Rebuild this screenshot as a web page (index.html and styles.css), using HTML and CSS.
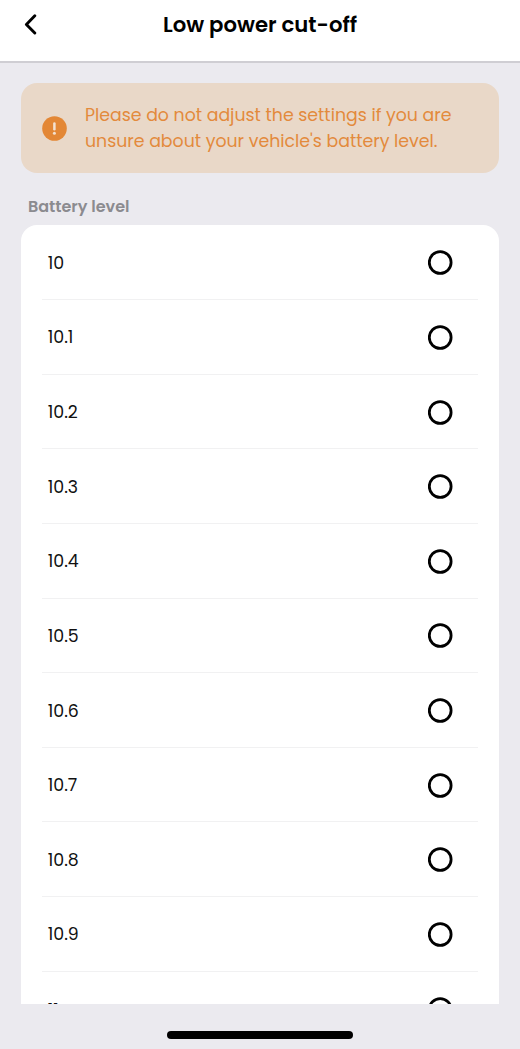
FILE: index.html
```html
<!DOCTYPE html>
<html lang="en">
<head>
<meta charset="utf-8">
<title>Low power cut-off</title>
<link rel="stylesheet" href="styles.css">
</head>
<body>
<div class="screen">
  <header class="header">
    <svg class="back" width="14" height="22" viewBox="0 0 14 22" fill="none" stroke="#000" stroke-width="2.9" stroke-linecap="round" stroke-linejoin="round"><path d="M10.8 2.8 2.4 11.4l8.4 8.6"/></svg>
    <h1 class="title">Low power cut-off</h1>
  </header>
  <main class="content">
    <section class="notice">
      <svg class="notice-icon" width="25" height="25" viewBox="0 0 25 25"><circle cx="12.5" cy="12.5" r="12.3" fill="#e38735"/><path d="M12.4 7.6v5.6" stroke="#f3e1d0" stroke-width="2.5" stroke-linecap="round"/><circle cx="12.4" cy="17.3" r="1.5" fill="#f3e1d0"/></svg>
      <p class="notice-text">Please do not adjust the settings if you are<br>unsure about your vehicle's battery level.</p>
    </section>
    <h2 class="label">Battery level</h2>
    <ul class="list">
      <li class="row"><span>10</span><svg class="radio" viewBox="0 0 25 25"><circle cx="12.2" cy="12.5" r="10.9"/></svg></li>
      <li class="row"><span>10.1</span><svg class="radio" viewBox="0 0 25 25"><circle cx="12.2" cy="12.5" r="10.9"/></svg></li>
      <li class="row"><span>10.2</span><svg class="radio" viewBox="0 0 25 25"><circle cx="12.2" cy="12.5" r="10.9"/></svg></li>
      <li class="row"><span>10.3</span><svg class="radio" viewBox="0 0 25 25"><circle cx="12.2" cy="12.5" r="10.9"/></svg></li>
      <li class="row"><span>10.4</span><svg class="radio" viewBox="0 0 25 25"><circle cx="12.2" cy="12.5" r="10.9"/></svg></li>
      <li class="row"><span>10.5</span><svg class="radio" viewBox="0 0 25 25"><circle cx="12.2" cy="12.5" r="10.9"/></svg></li>
      <li class="row"><span>10.6</span><svg class="radio" viewBox="0 0 25 25"><circle cx="12.2" cy="12.5" r="10.9"/></svg></li>
      <li class="row"><span>10.7</span><svg class="radio" viewBox="0 0 25 25"><circle cx="12.2" cy="12.5" r="10.9"/></svg></li>
      <li class="row"><span>10.8</span><svg class="radio" viewBox="0 0 25 25"><circle cx="12.2" cy="12.5" r="10.9"/></svg></li>
      <li class="row"><span>10.9</span><svg class="radio" viewBox="0 0 25 25"><circle cx="12.2" cy="12.5" r="10.9"/></svg></li>
      <li class="row row-last"><span>11</span><svg class="radio" viewBox="0 0 25 25"><circle cx="12.2" cy="12.5" r="10.9"/></svg></li>
    </ul>
  </main>
  <footer class="footer"><div class="home-bar"></div></footer>
</div>
</body>
</html>
```
FILE: styles.css
```css
* { box-sizing: border-box; margin: 0; padding: 0; }
body { background: #ebeaef; font-family: Poppins, Inter, sans-serif; }
.screen { width: 520px; height: 1049px; display: flex; flex-direction: column; overflow: hidden; }
.header { height: 63px; flex: none; background: #fff; border-bottom: 2px solid #cfced3; display: grid; grid-template-columns: 60px 1fr 60px; align-items: start; }
.back { margin: 13px 0 0 24px; }
.title { margin-top: 9px; font-size: 21.2px; line-height: 32px; font-weight: 600; text-align: center; color: #000; white-space: nowrap; }
.content { flex: none; height: 941px; padding: 20px 21.5px 0 21.4px; overflow: hidden; }
.notice { height: 90.4px; border-radius: 16px; background: #e9d8c8; color: #e38a3c; display: flex; align-items: center; padding-left: 21px; }
.notice-icon { flex: none; margin-right: 17.6px; }
.notice-text { padding-top: 1px; font-size: 17.33px; line-height: 25.5px; white-space: nowrap; }
.label { margin: 21px 0 0 6.5px; height: 31px; font-size: 16px; line-height: 25px; font-weight: 600; color: #8b8b8f; }
.list { list-style: none; background: #fff; border-radius: 16px 16px 0 0; padding: 0 21px; }
.row { height: 74.63px; display: flex; align-items: center; justify-content: space-between; padding: 1.3px 25px 0 5.4px; border-bottom: 1px solid #f1f1f2; font-size: 17.33px; color: #111; }
.row-last span { padding-top: 2px; }
.radio { width: 25px; height: 25px; fill: none; stroke: #000; stroke-width: 2.8; }
.footer { flex: 1; display: flex; justify-content: center; padding-top: 27px; }
.home-bar { width: 186px; height: 8px; border-radius: 4px; background: #000; }
```
